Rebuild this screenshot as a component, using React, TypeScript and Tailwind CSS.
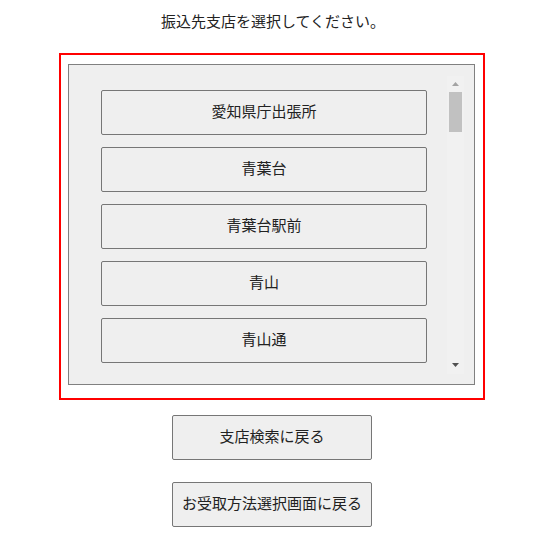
import React from 'react';

const branches = ['愛知県庁出張所', '青葉台', '青葉台駅前', '青山', '青山通'];

export default function App() {
  return (
    <div
      className="w-[550px] h-[549px] bg-white text-[15px] text-[#222]"
      style={{ fontFamily: '"Noto Sans CJK JP", "Noto Sans", sans-serif' }}
    >
      {/* heading */}
      <p className="pt-[10px] h-[53px] pl-[161px] leading-[22px]">振込先支店を選択してください。</p>

      {/* branch picker */}
      <div className="ml-[59px] w-[426px] h-[347px] border-2 border-[#ff0000] pt-[9px] pl-[7px]">
        <div className="w-[407px] h-[321px] border border-[#808080] bg-[#efefef] pt-[11px] flex">
          <div className="w-[378px] h-[298px] overflow-hidden pt-[14px] pl-[32px]">
            <div className="flex flex-col gap-[12px]">
              {branches.map((name) => (
                <button
                  key={name}
                  className="w-[326px] h-[45px] shrink-0 border border-[#767676] rounded-[2px] bg-[#efefef] text-center pb-[3px]"
                >
                  {name}
                </button>
              ))}
            </div>
          </div>

          {/* scrollbar */}
          <div className="w-[17px] h-[298px] bg-[#f1f1f1] flex flex-col items-center">
            <svg width="9" height="6" viewBox="0 0 9 6" className="mt-[5px]">
              <polygon points="4.5,1 8,5 1,5" fill="#a3a3a3" />
            </svg>
            <div className="mt-[5px] w-[13px] h-[40px] bg-[#c1c1c1]" />
            <div className="flex-1" />
            <svg width="9" height="6" viewBox="0 0 9 6" className="mb-[6px]">
              <polygon points="1,1 8,1 4.5,5" fill="#505050" />
            </svg>
          </div>
        </div>
      </div>

      {/* back buttons */}
      <div className="flex flex-col gap-[22px] pt-[15px] pl-[172px]">
        <button className="w-[200px] h-[45px] border border-[#767676] rounded-[2px] bg-[#efefef] pb-[3px]">
          支店検索に戻る
        </button>
        <button className="w-[200px] h-[45px] border border-[#767676] rounded-[2px] bg-[#efefef] pb-[3px]">
          お受取方法選択画面に戻る
        </button>
      </div>
    </div>
  );
}
